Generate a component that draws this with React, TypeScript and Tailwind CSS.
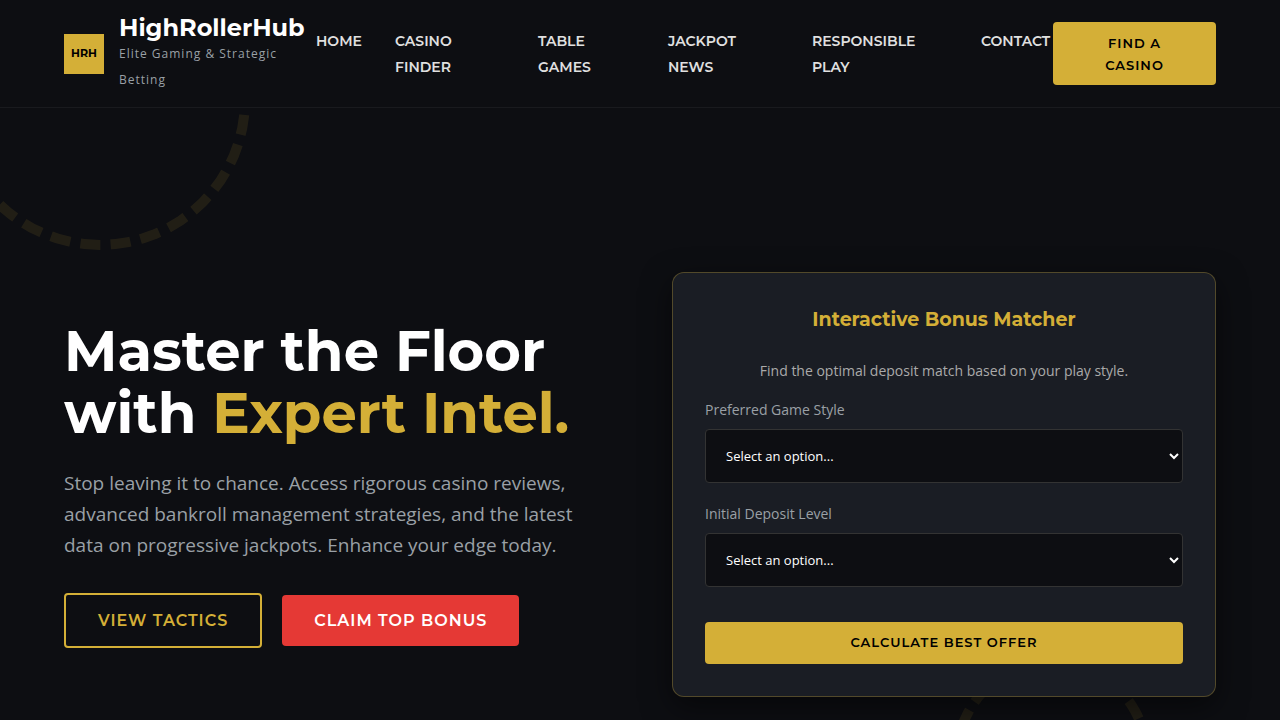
import React from 'react';

const NAV_LINKS = [
  { label: 'Home', href: '#home' },
  { label: 'Casino Finder', href: '#finder' },
  { label: 'Table Games', href: '#tables' },
  { label: 'Jackpot News', href: '#jackpots' },
  { label: 'Responsible Play', href: '#responsible' },
  { label: 'Contact', href: '#contact' },
];

interface SelectFieldProps {
  id: string;
  label: string;
  options: string[];
}

function SelectField({ id, label, options }: SelectFieldProps) {
  return (
    <div className="mb-5">
      <label htmlFor={id} className="mb-2 block text-sm leading-[22px] text-[#9aa0a6]">
        {label}
      </label>
      <select
        id={id}
        className="h-[54px] w-full rounded border border-[#333333] bg-[#0d0e12] px-4 text-[13px] text-white"
      >
        <option value="">Select an option...</option>
        {options.map((option) => (
          <option key={option}>{option}</option>
        ))}
      </select>
    </div>
  );
}

function Header() {
  return (
    <header className="relative z-20 flex h-[108px] items-center border-b border-white/5 bg-[#0d0e12] px-[5%]">
      <a href="#home" className="flex w-[252px] shrink-0 items-center gap-[15px]">
        <span className="flex size-10 shrink-0 items-center justify-center bg-[#d4af37] font-['Montserrat','Inter',sans-serif] text-[11px] font-bold text-black">
          HRH
        </span>
        <span className="flex flex-col">
          <span className="font-['Montserrat','Inter',sans-serif] text-2xl leading-[26px] font-bold text-white">
            HighRollerHub
          </span>
          <span className="text-xs leading-[26px] tracking-[1px] text-[#9aa0a6]">
            Elite Gaming &amp; Strategic Betting
          </span>
        </span>
      </a>
      <nav className="flex-1">
        <ul className="grid grid-cols-[47fr_111fr_98fr_112fr_137fr_72fr] gap-8">
          {NAV_LINKS.map((link) => (
            <li key={link.label}>
              <a
                href={link.href}
                className="block font-['Montserrat','Inter',sans-serif] text-sm leading-[26px] font-semibold text-[#e0e0e0] uppercase"
              >
                {link.label}
              </a>
            </li>
          ))}
        </ul>
      </nav>
      <button
        type="button"
        className="h-[63px] w-[163px] shrink-0 rounded bg-[#d4af37] px-8 font-['Montserrat','Inter',sans-serif] text-[13px] leading-[22px] font-semibold tracking-[1px] text-black uppercase"
      >
        Find a Casino
      </button>
    </header>
  );
}

function BonusMatcher() {
  return (
    <form
      className="rounded-xl border border-[#d4af37]/30 bg-[#1a1d24] p-8 shadow-[0_10px_30px_rgba(0,0,0,0.5)]"
      onSubmit={(e) => e.preventDefault()}
    >
      <h2 className="mb-6 text-center font-['Montserrat','Inter',sans-serif] text-[19px] leading-[30px] font-bold text-[#d4af37]">
        Interactive Bonus Matcher
      </h2>
      <p className="mb-4 text-center text-sm leading-[24px] text-[#aaaaaa]">
        Find the optimal deposit match based on your play style.
      </p>
      <SelectField id="game-style" label="Preferred Game Style" options={['Slots', 'Table Games', 'Live Dealer']} />
      <SelectField id="deposit-level" label="Initial Deposit Level" options={['Low', 'Medium', 'High']} />
      <button
        type="submit"
        className="mt-[15px] h-[42px] w-full rounded bg-[#d4af37] font-['Montserrat','Inter',sans-serif] text-[13px] font-semibold tracking-[1px] text-black uppercase"
      >
        Calculate Best Offer
      </button>
    </form>
  );
}

export default function App() {
  return (
    <div className="relative h-screen overflow-hidden bg-[#0d0e12] font-['Open_Sans',sans-serif]">
      {/* poker chip rings */}
      <div className="absolute -top-[50px] -left-[50px] size-[300px] rounded-full border-10 border-dashed border-[#d4af37] opacity-10" />
      <div className="absolute top-[657px] right-[10%] size-[200px] rounded-full border-10 border-dashed border-[#d4af37] opacity-10" />
      <Header />
      <main className="relative grid min-h-[753px] grid-cols-2 items-center gap-16 px-[5%]">
        <section className="pb-0.5">
          <h1 className="mb-6 font-['Montserrat','Inter',sans-serif] text-[56px] leading-[62px] font-bold text-white">
            Master the Floor <br />
            with <span className="text-[#d4af37]">Expert Intel.</span>
          </h1>
          <p className="mb-8 text-[19px] leading-[31px] text-[#9aa0a6]">
            Stop leaving it to chance. Access rigorous casino reviews, advanced bankroll management strategies, and the
            latest data on progressive jackpots. Enhance your edge today.
          </p>
          <div className="flex items-center gap-5 font-['Montserrat','Inter',sans-serif] text-base font-semibold tracking-[1px] uppercase">
            <a href="#tactics" className="rounded border-2 border-[#d4af37] px-8 py-3 leading-[27px] text-[#d4af37]">
              View Tactics
            </a>
            <a href="#bonus" className="rounded bg-[#e53935] px-8 py-3 leading-[27px] text-white">
              Claim Top Bonus
            </a>
          </div>
        </section>
        <BonusMatcher />
      </main>
    </div>
  );
}
